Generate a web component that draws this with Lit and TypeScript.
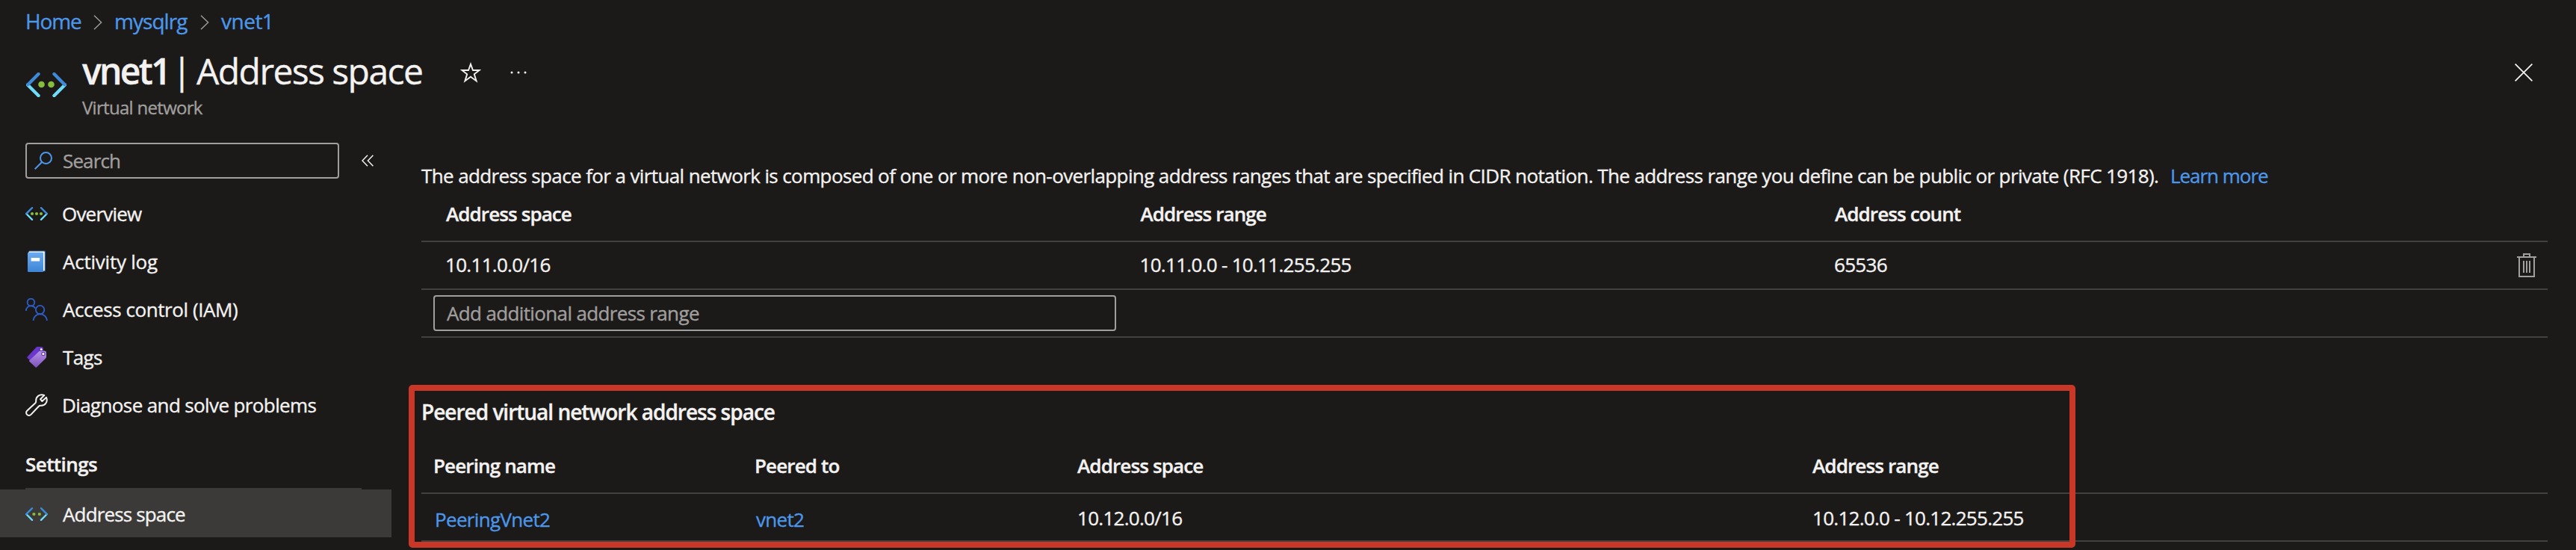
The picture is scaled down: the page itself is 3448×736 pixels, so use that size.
import { LitElement, html, css, svg } from "lit";
import { customElement } from "lit/decorators.js";

const vnetHeaderIcon = html`<svg width="54" height="33" viewBox="0 0 54 33" fill="none">
  <path d="M16.5 31 L2 16.5" stroke="#6fdcfa" stroke-width="4.4" stroke-linecap="round" />
  <path d="M37.5 31 L52 16.5" stroke="#6fdcfa" stroke-width="4.4" stroke-linecap="round" />
  <path d="M16.5 2 L2.4 16.2" stroke="#3d8bd8" stroke-width="4.4" stroke-linecap="round" />
  <path d="M37.5 2 L51.6 16.2" stroke="#3d8bd8" stroke-width="4.4" stroke-linecap="round" />
  <circle cx="20.5" cy="16" r="4.3" fill="#86bd3a" /><circle cx="33.5" cy="16" r="4.3" fill="#86bd3a" />
</svg>`;

const angle = (dots: number[]) => html`<svg width="30" height="18" viewBox="0 0 30 18" fill="none">
  <path d="M9 16.8 L1.2 9 M21 16.8 L28.8 9" stroke="#6fdcfa" stroke-width="2.4" stroke-linecap="round" />
  <path d="M9 1.2 L1.3 8.9 M21 1.2 L28.7 8.9" stroke="#3d8bd8" stroke-width="2.4" stroke-linecap="round" />
  ${dots.map((x) => svg`<circle cx=${x} cy="9" r="2.1" fill="#86bd3a" />`)}
</svg>`;

const bookIcon = html`<svg width="30" height="30" viewBox="0 0 30 30">
  <defs><linearGradient id="b" x1="0" y1="0" x2="0" y2="1"><stop offset="0" stop-color="#6cabee" /><stop offset="1" stop-color="#3d86d6" /></linearGradient></defs>
  <rect x="4.5" y="0.6" width="22.4" height="27.6" rx="1.4" fill="#2e6cb4" />
  <rect x="4.5" y="1.6" width="21.2" height="26" rx="1" fill="#fff" />
  <rect x="3" y="2.8" width="21" height="26.2" rx="1.2" fill="url(#b)" />
  <rect x="7.6" y="10" width="11.6" height="4.4" rx="0.5" fill="#fff" />
</svg>`;

const peopleIcon = html`<svg width="30" height="30" viewBox="0 0 30 30" fill="none" stroke="#2d5cc4" stroke-width="1.9">
  <circle cx="7.4" cy="5.6" r="4.8" /><path d="M0.9 17 C0.9 12.8 3.8 10.4 7.4 10.4 C10 10.4 12 11.5 13.2 13.4" />
  <circle cx="19.6" cy="15.6" r="5.7" /><path d="M10.5 30 C11 25 14.6 21.3 19.6 21.3 C24.7 21.3 28.5 25 29 30" />
</svg>`;

const tagsIcon = html`<svg width="30" height="30" viewBox="0 0 30 30">
  <defs><linearGradient id="t" x1="0" y1="0" x2="0" y2="1"><stop offset="0" stop-color="#b894e6" /><stop offset="1" stop-color="#7c52bd" /></linearGradient></defs>
  <path d="M2.6 14.4 Q2 15.4 2.7 16 L9 22 L24 8 V4 Q24 1 21 1 H16 Q15 1 14.2 1.9 Z" fill="#6b36cb" />
  <path d="M5.2 19.4 L18 7.4 Q19 6.6 20 6.6 H25 Q28 6.8 28 9.6 V14.6 Q28 15.6 27.2 16.4 L15 28.4 Q14.3 29 13.6 28.4 L5.2 20.6 Q4.6 20 5.2 19.4 Z" fill="url(#t)" />
  <circle cx="21.2" cy="4.6" r="2" fill="#fff" stroke="#4d2491" stroke-width="1" />
  <circle cx="23.9" cy="10.6" r="2.2" fill="#fff" stroke="#6336ab" stroke-width="1.1" />
</svg>`;

const wrenchIcon = html`<svg width="30" height="30" viewBox="0 0 30 30" fill="none" stroke="#f3f2f1" stroke-width="2" stroke-linejoin="round">
  <path d="M25.2 2 L20 7.2 L22.4 10 L28 4.8 C30.4 10.2 26.6 16.2 20.6 15.8 C19.4 15.7 18.6 16 17.8 16.8 L7.6 27.6 C5.8 29.4 3.6 29.3 2.2 27.9 C0.6 26.3 0.7 24 2.4 22.4 L13.4 12.2 C14.2 11.4 14.3 10.6 14.2 9.6 C13.8 3.6 19.4 -0.4 25.2 2 Z" />
</svg>`;

const crumbChevron = html`<svg class="crumb-chevron" width="12" height="20" viewBox="0 0 12 20" fill="none"><path d="M1 0.8 L10.6 10 L1 19.2" stroke="#a19f9d" stroke-width="1.4" /></svg>`;

const menu = [
  { key: "overview", label: "Overview", icon: angle([9, 15, 21]) },
  { key: "activity", label: "Activity log", icon: bookIcon },
  { key: "access", label: "Access control (IAM)", icon: peopleIcon },
  { key: "tags", label: "Tags", icon: tagsIcon },
  { key: "diagnose", label: "Diagnose and solve problems", icon: wrenchIcon },
];

@customElement("app-root")
export class AppRoot extends LitElement {
  static styles = css`
    :host {
      display: flex;
      flex-direction: column;
      position: relative;
      width: 3448px;
      height: 736px;
      overflow: hidden;
      box-sizing: border-box;
      background: #1b1a19;
      color: #f3f2f1;
      font: 400 26px/36px "Open Sans", "Noto Sans", sans-serif;
      white-space: nowrap;
      font-kerning: normal;
      -webkit-text-stroke: 0.35px currentColor;
    }
    * { box-sizing: border-box; }
    svg { display: block; flex: none; }
    a { color: #4c97ea; text-decoration: none; }

    .crumbs { display: flex; align-items: center; height: 56px; padding-left: 34px; font-size: 28px; line-height: 56px; }
    .crumb-chevron { margin-top: 4px; }
    .crumb-home { width: 91px; letter-spacing: -1.14px; }
    .crumb-group { width: 129px; margin-left: 16px; letter-spacing: -0.95px; }
    .crumb-group + .crumb-chevron { margin-left: -14px; }
    .crumb-vnet { margin-left: 16px; letter-spacing: -0.5px; }

    .header { display: flex; height: 104px; padding-left: 35px; }
    .header-icon { margin-top: 41px; }
    .titles { margin: 7px 0 0 21px; width: 506px; }
    .title { display: grid; grid-template-columns: 112px 41px auto; margin: 0; font-size: 48px; font-weight: 400; line-height: 64px; }
    .title-name { font-weight: 600; letter-spacing: -2.69px; }
    .title-bar { text-align: center; text-indent: 2px; }
    .title-page { letter-spacing: -1.57px; }
    .subtitle { font-size: 24px; line-height: 34px; letter-spacing: -0.7px; color: #a19f9d; }
    .star { margin-top: 27px; }
    .dots { margin: 39px 0 0 38px; }
    .close { margin: 28px 58px 0 auto; }

    .body { display: flex; flex: 1; }
    .side { width: 564px; padding-top: 31px; }
    .search-row { display: flex; align-items: center; padding-left: 34px; }
    .search { display: flex; align-items: center; width: 420px; height: 48px; padding-left: 10px; border: 2px solid #a19f9d; border-radius: 4px; color: #a19f9d; }
    .search-label { margin-left: 14px; line-height: 44px; letter-spacing: -0.88px; }
    .collapse { margin-left: 30px; }
    .menu { margin-top: 15px; }
    .item { display: flex; align-items: center; height: 64px; padding-left: 34px; line-height: 64px; }
    .item-label { margin-left: 20px; }
    .overview { margin-left: 19px; letter-spacing: -0.8px; }
    .activity { letter-spacing: -0.23px; }
    .access { letter-spacing: -0.43px; }
    .tags { letter-spacing: -0.63px; }
    .diagnose { margin-left: 19px; letter-spacing: -0.62px; }
    .group { width: 450px; margin: 15px 0 0 34px; height: 66px; border-bottom: 2px solid #3b3a39; font-weight: 600; line-height: 64px; letter-spacing: -0.57px; }
    .selected { width: 524px; padding-top: 2px; background: #3b3a39; }
    .space { letter-spacing: -0.85px; }

    .main { width: 2846px; padding-top: 55px; }
    .intro { display: flex; line-height: 40px; }
    .intro-text { width: 2341px; letter-spacing: -0.614px; }
    .learn { letter-spacing: -1.03px; }
    .row { display: grid; border-bottom: 2px solid #424141; }
    .ranges { grid-template-columns: 929.5px 929.5px 1fr auto; padding-left: 33px; }
    .ranges.head { height: 69px; line-height: 62px; font-weight: 600; letter-spacing: -0.9px; }
    .ranges.data { height: 64px; line-height: 60px; letter-spacing: -0.7px; }
    .shift { margin-left: -1px; }
    .trash { margin: 15px 15px 0 0; }
    .entry { height: 64px; padding: 7px 0 0 16px; }
    .input { width: 914px; height: 48px; padding-left: 16px; border: 2px solid #a19f9d; border-radius: 4px; color: #a19f9d; line-height: 44px; letter-spacing: -0.64px; }
    .peered-title { margin: 79px 0 0; font-size: 28px; font-weight: 600; line-height: 40px; letter-spacing: -1px; }
    .peers { grid-template-columns: 430px 432px 984px 1fr; padding-left: 16px; }
    .peers.head { margin-top: 16px; height: 74px; line-height: 72px; font-weight: 600; letter-spacing: -0.86px; }
    .peers.data { height: 64px; line-height: 64px; letter-spacing: -0.72px; }
    .peer-link { margin-left: 2px; line-height: 68px; letter-spacing: -0.67px; }
    .marker { position: absolute; left: 547px; top: 515px; width: 2231px; height: 218px; border: 8px solid #c93726; border-radius: 5px; }
  `;

  render() {
    return html`
      <nav class="crumbs">
        <a class="crumb-home">Home</a>${crumbChevron}
        <a class="crumb-group">mysqlrg</a>${crumbChevron}
        <a class="crumb-vnet">vnet1</a>
      </nav>
      <header class="header">
        <div class="header-icon">${vnetHeaderIcon}</div>
        <div class="titles">
          <h1 class="title"><span class="title-name">vnet1</span><span class="title-bar">|</span><span class="title-page">Address space</span></h1>
          <div class="subtitle">Virtual network</div>
        </div>
        <svg class="star" width="28" height="28" viewBox="0 0 28 28" fill="none" stroke="#f3f2f1" stroke-width="1.9">
          <path d="M14 2.8 L17 11 H25.6 L18.8 16.3 L21.6 25.4 L14 19.8 L6.4 25.4 L9.2 16.3 L2.4 11 H11 Z" />
        </svg>
        <svg class="dots" width="24" height="4" viewBox="0 0 24 4" fill="#f3f2f1"><circle cx="3" cy="2" r="1.5" /><circle cx="12" cy="2" r="1.5" /><circle cx="21" cy="2" r="1.5" /></svg>
        <svg class="close" width="24" height="26" viewBox="0 0 24 26" stroke="#f3f2f1" stroke-width="1.8"><path d="M0.6 1.6 L23.4 24.4 M23.4 1.6 L0.6 24.4" /></svg>
      </header>
      <div class="body">
        <aside class="side">
          <div class="search-row">
            <div class="search">
              <svg width="24" height="24" viewBox="0 0 24 24" fill="none" stroke="#4c97ea" stroke-width="2"><circle cx="15.5" cy="8.5" r="7.5" /><path d="M10.2 13.8 L0.7 23.3" /></svg>
              <span class="search-label">Search</span>
            </div>
            <svg class="collapse" width="16" height="16" viewBox="0 0 16 16" fill="none" stroke="#f3f2f1" stroke-width="1.5"><path d="M8 0.8 L1 8 L8 15.2 M15.4 0.8 L8.4 8 L15.4 15.2" /></svg>
          </div>
          <div class="menu">
            ${menu.map((m) => html`<div class="item">${m.icon}<span class="item-label ${m.key}">${m.label}</span></div>`)}
          </div>
          <div class="group">Settings</div>
          <div class="item selected">${angle([11.4, 18.8])}<span class="item-label space">Address space</span></div>
        </aside>
        <main class="main">
          <div class="intro">
            <span class="intro-text">The address space for a virtual network is composed of one or more non-overlapping address ranges that are specified in CIDR notation. The address range you define can be public or private (RFC 1918).</span>
            <a class="learn">Learn more</a>
          </div>
          <div class="row ranges head"><span>Address space</span><span>Address range</span><span>Address count</span></div>
          <div class="row ranges data">
            <span class="shift">10.11.0.0/16</span><span class="shift">10.11.0.0 - 10.11.255.255</span><span class="shift">65536</span>
            <svg class="trash" width="26" height="32" viewBox="0 0 26 32" fill="none" stroke="#a19f9d" stroke-width="2">
              <path d="M9 4 V1 H17 V4 M0 5 H26 M3 6 V31 H23 V6 M9 10 V26 M13 10 V26 M17 10 V26" />
            </svg>
          </div>
          <div class="row entry"><div class="input">Add additional address range</div></div>
          <div class="peered-title">Peered virtual network address space</div>
          <div class="row peers head"><span>Peering name</span><span>Peered to</span><span>Address space</span><span>Address range</span></div>
          <div class="row peers data">
            <a class="peer-link">PeeringVnet2</a><a class="peer-link">vnet2</a><span>10.12.0.0/16</span><span>10.12.0.0 - 10.12.255.255</span>
          </div>
        </main>
      </div>
      <div class="marker"></div>
    `;
  }
}
